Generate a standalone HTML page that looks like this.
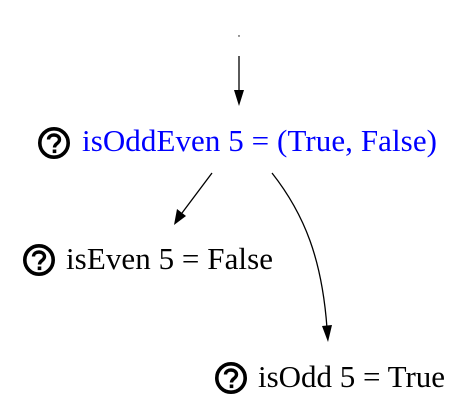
<!DOCTYPE html>
<html><head><style>
html,body{margin:0;padding:0;background:#fff;width:471px;height:415px;overflow:hidden}
svg{position:absolute;left:0;top:0}
text{font-family:"Liberation Serif",serif;font-size:31px}
</style></head><body>
<svg width="471" height="415" viewBox="0 0 471 415">
<defs>
<g id="q">
<circle cx="0" cy="0" r="14.2" fill="none" stroke="#000" stroke-width="3.6"/>
<path d="M-5.5,-3.5 C-5.5,-9.5 5.5,-9.5 5.5,-3.5 C5.5,0.5 0.5,0.5 0.5,4.5" fill="none" stroke="#000" stroke-width="3.4"/>
<rect x="-1.3" y="6.5" width="3.6" height="3.6" fill="#000"/>
</g>
</defs>
<circle cx="239" cy="36" r="0.7" fill="#000"/>
<line x1="239" y1="56" x2="239" y2="92" stroke="#000" stroke-width="1.3"/>
<polygon points="234,90 244,90 239,106" fill="#000"/>
<use href="#q" x="54" y="143"/>
<text x="82" y="151" fill="#0000ff" textLength="355">isOddEven 5 = (True, False)</text>
<line x1="212" y1="173" x2="182" y2="213" stroke="#000" stroke-width="1.3"/>
<polygon points="177,209 186,216 174,225" fill="#000"/>
<use href="#q" x="39" y="260"/>
<text x="66" y="269" fill="#000" textLength="207">isEven 5 = False</text>
<path d="M272,173 C305,215 322,260 327,328" fill="none" stroke="#000" stroke-width="1.3"/>
<polygon points="322,326 332,325 328,342" fill="#000"/>
<use href="#q" x="231" y="378"/>
<text x="258" y="387" fill="#000" textLength="187">isOdd 5 = True</text>
</svg>
</body></html>
